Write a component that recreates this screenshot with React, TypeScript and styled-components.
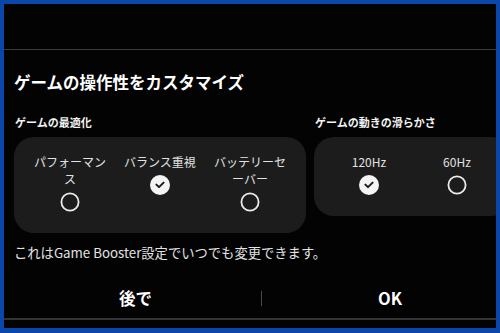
import React from "react";
import styled, { createGlobalStyle } from "styled-components";

const GlobalStyle = createGlobalStyle`
  html, body {
    margin: 0;
    padding: 0;
    background: #0b47ab;
  }
  * {
    box-sizing: border-box;
  }
`;

const Frame = styled.div`
  width: 500px;
  height: 333px;
  padding: 4px 4px 5px 4px;
  background: #0b47ab;
  font-family: "Noto Sans CJK JP", "Noto Sans", sans-serif;
`;

const Screen = styled.div`
  height: 100%;
  background: #030303;
  overflow: hidden;
  display: flex;
  flex-direction: column;
`;

const TopBar = styled.div`
  height: 46px;
  flex-shrink: 0;
  border-bottom: 1px solid #3b3b3d;
`;

const Dialog = styled.div`
  padding: 20px 0 0 10px;
  width: 540px;
  flex-shrink: 0;
`;

const Title = styled.h1`
  margin: 0;
  font-size: 16.5px;
  line-height: 24px;
  font-weight: 700;
  color: #ffffff;
`;

const Sections = styled.div`
  display: flex;
  gap: 8px;
  margin-top: 21px;
  align-items: flex-start;
`;

const Section = styled.div`
  display: flex;
  flex-direction: column;
`;

const SectionLabel = styled.div`
  font-size: 11px;
  line-height: 14px;
  font-weight: 700;
  color: #f2f2f2;
  padding-left: 1px;
`;

const Card = styled.div<{ $cols: number; $colWidth: number }>`
  margin-top: 8px;
  background: #1c1c1d;
  border-radius: 20px;
  padding: 16px 11px 20px;
  display: grid;
  grid-template-columns: repeat(${({ $cols }) => $cols}, ${({ $colWidth }) => $colWidth}px);
  align-items: start;
`;

const Option = styled.div`
  display: flex;
  flex-direction: column;
  align-items: center;
`;

const OptionLabel = styled.div`
  font-size: 12px;
  line-height: 17px;
  color: #e2e2e2;
  text-align: center;
  padding: 0 6px;
`;

const RadioBox = styled.div`
  width: 22px;
  height: 22px;
  margin-top: 4px;
  display: flex;
  align-items: center;
  justify-content: center;
`;

const Note = styled.p`
  margin: 11px 0 0;
  font-size: 13.3px;
  line-height: 18px;
  color: #e4e4e4;
`;

const ButtonRow = styled.div`
  display: flex;
  align-items: center;
  height: 40px;
  margin-top: 16px;
`;

const ActionButton = styled.button<{ $width: number }>`
  width: ${({ $width }) => $width}px;
  height: 100%;
  background: none;
  border: none;
  padding: 0;
  font-family: inherit;
  font-size: 16.5px;
  font-weight: 700;
  color: #ffffff;
`;

const Divider = styled.div`
  width: 1px;
  height: 15px;
  margin: 0 4px;
  background: #4a4a4a;
`;

const BottomBar = styled.div`
  flex: 1;
  border-top: 2px solid #333336;
`;

function Radio({ checked }: { checked?: boolean }) {
  return (
    <RadioBox>
      {checked ? (
        <svg width="20" height="20" viewBox="0 0 20 20">
          <circle cx="10" cy="10" r="10" fill="#f4f4f4" />
          <path
            d="M6.4 9.6 L9 12.1 L13.6 7.6"
            fill="none"
            stroke="#1c1c1d"
            strokeWidth="2"
            strokeLinecap="round"
            strokeLinejoin="round"
          />
        </svg>
      ) : (
        <svg width="20" height="20" viewBox="0 0 20 20">
          <circle cx="10" cy="10" r="8.6" fill="none" stroke="#ebebeb" strokeWidth="1.8" />
        </svg>
      )}
    </RadioBox>
  );
}

const optimization = [
  { label: "パフォーマンス", checked: false },
  { label: "バランス重視", checked: true },
  { label: "バッテリーセーバー", checked: false },
];

const smoothness = [
  { label: "120Hz", checked: true },
  { label: "60Hz", checked: false },
];

export default function App() {
  return (
    <>
      <GlobalStyle />
      <Frame>
        <Screen>
          <TopBar />
          <Dialog>
            <Title>ゲームの操作性をカスタマイズ</Title>
            <Sections>
              <Section>
                <SectionLabel>ゲームの最適化</SectionLabel>
                <Card $cols={3} $colWidth={90}>
                  {optimization.map((o) => (
                    <Option key={o.label}>
                      <OptionLabel>{o.label}</OptionLabel>
                      <Radio checked={o.checked} />
                    </Option>
                  ))}
                </Card>
              </Section>
              <Section>
                <SectionLabel>ゲームの動きの滑らかさ</SectionLabel>
                <Card $cols={2} $colWidth={88}>
                  {smoothness.map((o) => (
                    <Option key={o.label}>
                      <OptionLabel>{o.label}</OptionLabel>
                      <Radio checked={o.checked} />
                    </Option>
                  ))}
                </Card>
              </Section>
            </Sections>
            <Note>これはGame Booster設定でいつでも変更できます。</Note>
            <ButtonRow>
              <ActionButton $width={243}>後で</ActionButton>
              <Divider />
              <ActionButton $width={248}>OK</ActionButton>
            </ButtonRow>
          </Dialog>
          <BottomBar />
        </Screen>
      </Frame>
    </>
  );
}
